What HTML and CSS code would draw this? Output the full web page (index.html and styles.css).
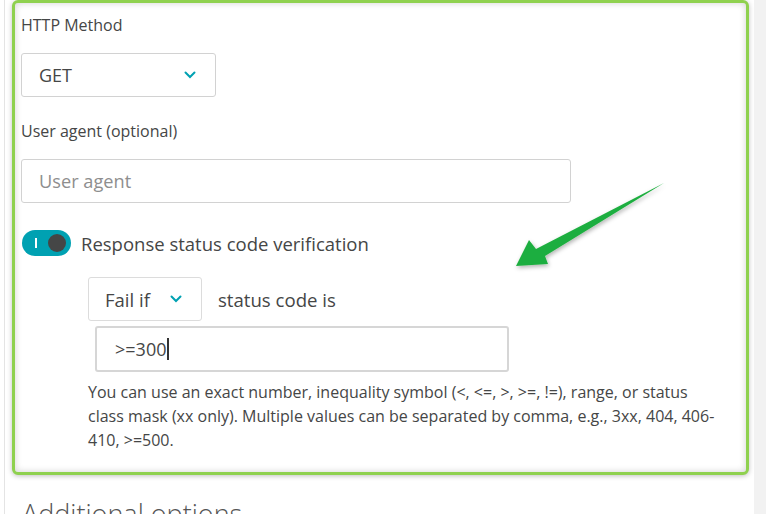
FILE: index.html
```html
<!DOCTYPE html>
<html>
<head>
<meta charset="utf-8">
<link rel="stylesheet" href="styles.css">
</head>
<body>
<div class="page">
  <div class="panel">
    <div class="highlight">
      <div class="field-label">HTTP Method</div>
      <div class="select select-method">
        <span>GET</span>
        <svg class="chev" width="12" height="8" viewBox="0 0 12 8"><path d="M1.5 1.5 L6 6 L10.5 1.5" fill="none" stroke="#00a1b2" stroke-width="2" stroke-linecap="round"/></svg>
      </div>
      <div class="field-label label-ua">User agent (optional)</div>
      <div class="input input-ua"><span class="placeholder">User agent</span></div>
      <div class="toggle-row">
        <div class="toggle"><span class="toggle-bar"></span><span class="toggle-knob"></span></div>
        <span class="toggle-text">Response status code verification</span>
      </div>
      <div class="indent">
        <div class="fail-row">
          <div class="select select-fail">
            <span>Fail if</span>
            <svg class="chev" width="12" height="8" viewBox="0 0 12 8"><path d="M1.5 1.5 L6 6 L10.5 1.5" fill="none" stroke="#00a1b2" stroke-width="2" stroke-linecap="round"/></svg>
          </div>
          <span class="fail-text">status code is</span>
        </div>
        <div class="input input-code"><span class="value">&gt;=300</span><span class="caret"></span></div>
        <p class="help">You can use an exact number, inequality symbol (&lt;, &lt;=, &gt;, &gt;=, !=), range, or status class mask (xx only). Multiple values can be separated by comma, e.g., 3xx, 404, 406-<wbr>410, &gt;=500.</p>
      </div>
    </div>
    <h2 class="section-title">Additional options</h2>
  </div>
</div>
<svg class="arrow" width="766" height="514" viewBox="0 0 766 514">
  <defs>
    <filter id="sh" x="-20%" y="-20%" width="140%" height="140%">
      <feDropShadow dx="1" dy="2" stdDeviation="2" flood-color="#000" flood-opacity="0.3"/>
    </filter>
  </defs>
  <path d="M664 183 L545 256 L548 264 L516 266 L529 240 L536 249 Z" fill="#1fae3f" filter="url(#sh)"/>
</svg>
</body>
</html>
```

FILE: styles.css
```css
html, body {
  margin: 0;
  padding: 0;
}
body {
  width: 766px;
  height: 514px;
  overflow: hidden;
  background: #f2f2f2;
  font-family: "Open Sans", "DejaVu Sans", sans-serif;
  color: #454646;
  position: relative;
}
.page {
  width: 754px;
  height: 514px;
  background: #fff;
  padding-left: 4px;
  box-sizing: border-box;
}
.panel {
  height: 100%;
  border-left: 1px solid #e4e4e4;
  padding-left: 7px;
  box-sizing: border-box;
}
.highlight {
  width: 737px;
  box-sizing: border-box;
  border: 3px solid #8fd14f;
  border-radius: 6px;
  padding: 12px 24px 20px 6px;
  box-shadow: inset 0 0 7px rgba(0,0,0,0.18), 0 1px 5px rgba(0,0,0,0.25);
  background: #fff;
}
.field-label {
  font-size: 16px;
  line-height: 20px;
  color: #454646;
}
.select {
  display: flex;
  align-items: center;
  justify-content: space-between;
  height: 44px;
  box-sizing: border-box;
  border: 1px solid #d2d2d2;
  border-radius: 3px;
  font-size: 18px;
  color: #454646;
}
.select-method {
  margin-top: 18px;
  width: 195px;
  padding: 0 19px 0 17px;
}
.label-ua {
  margin-top: 24px;
}
.input {
  display: flex;
  align-items: center;
  box-sizing: border-box;
  border: 1px solid #d2d2d2;
  border-radius: 3px;
}
.input-ua {
  margin-top: 18px;
  width: 550px;
  height: 44px;
  padding-left: 17px;
  font-size: 18.2px;
}
.placeholder {
  color: #8e8e8e;
}
.toggle-row {
  display: flex;
  align-items: center;
  margin-top: 26px;
  height: 28px;
}
.toggle {
  position: relative;
  width: 49px;
  height: 26px;
  margin-left: 1px;
  border-radius: 13px;
  background: #00a1b2;
}
.toggle-bar {
  position: absolute;
  left: 13px;
  top: 8px;
  width: 2px;
  height: 10px;
  background: #fff;
}
.toggle-knob {
  position: absolute;
  left: 26px;
  top: 4px;
  width: 18px;
  height: 18px;
  border-radius: 50%;
  background: #454646;
}
.toggle-text {
  margin-left: 10px;
  font-size: 18.5px;
  color: #454646;
}
.indent {
  margin-left: 67px;
}
.fail-row {
  display: flex;
  align-items: center;
  margin-top: 20px;
}
.select-fail {
  width: 114px;
  padding: 0 19px 0 16px;
  border-color: #dcdcdc;
  font-size: 18.5px;
}
.fail-text {
  margin-left: 16px;
  font-size: 18.6px;
}
.input-code {
  margin-top: 5px;
  margin-left: 7px;
  width: 414px;
  height: 46px;
  border: 2px solid #d6d6d6;
  padding-left: 18px;
  font-size: 18px;
}
.caret {
  display: inline-block;
  width: 2px;
  height: 22px;
  background: #333;
  margin-left: 1px;
}
.help {
  margin: 8px 0 0 0;
  font-size: 16px;
  line-height: 24px;
  color: #454646;
}
.section-title {
  margin: 22px 0 0 10px;
  font-size: 27px;
  font-weight: 300;
  color: #555;
  line-height: 34px;
}
.arrow {
  position: absolute;
  left: 0;
  top: 0;
  pointer-events: none;
}
```
